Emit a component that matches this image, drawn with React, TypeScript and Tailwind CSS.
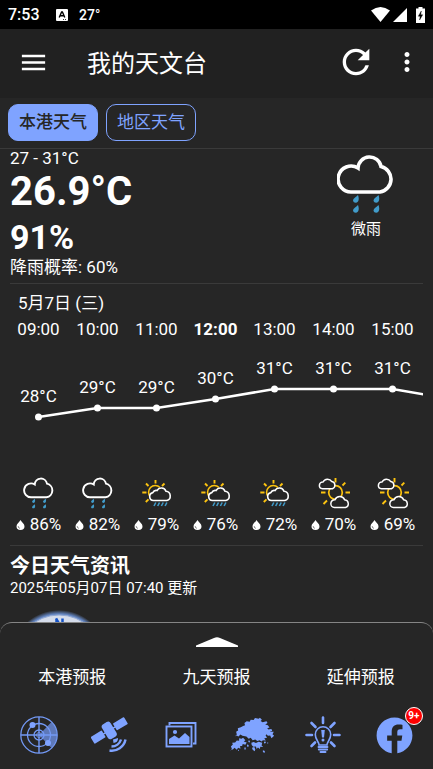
import React, { useState } from 'react';
import { MdMenu, MdMoreVert, MdRefresh } from 'react-icons/md';
import { FaFacebook } from 'react-icons/fa';

type WeatherKind = 'rain' | 'sunRain' | 'sunClouds';

interface HourForecast {
  time: string;
  temp: number;
  humidity: number;
  kind: WeatherKind;
}

const HOURS: HourForecast[] = [
  { time: '09:00', temp: 28, humidity: 86, kind: 'rain' },
  { time: '10:00', temp: 29, humidity: 82, kind: 'rain' },
  { time: '11:00', temp: 29, humidity: 79, kind: 'sunRain' },
  { time: '12:00', temp: 30, humidity: 76, kind: 'sunRain' },
  { time: '13:00', temp: 31, humidity: 72, kind: 'sunRain' },
  { time: '14:00', temp: 31, humidity: 70, kind: 'sunClouds' },
  { time: '15:00', temp: 31, humidity: 69, kind: 'sunClouds' },
];
const NEXT_TEMP = 30;
const CURRENT_HOUR = '12:00';
const COL_WIDTH = 59;

const RainIcon: React.FC<{ className: string; stroke: number }> = ({ className, stroke }) => (
  <svg viewBox="0 0 58 60" className={className} fill="none">
    <path
      d="M15 38A13 13 0 1 1 21 14A11.6 11.6 0 0 1 44 12.5A13 13 0 0 1 43 38Z"
      stroke="#fff"
      strokeWidth={stroke}
    />
    {[[19, 45], [39.5, 45], [19, 55], [39.5, 55]].map(([x, y]) => (
      <path
        key={`${x}-${y}`}
        transform={`translate(${x} ${y})`}
        d="M2-4C3-1 3 1 2 2.5C.5 4.500-2.500 4-3 1.500C-3-.5 0-2 2-4Z"
        fill="#419bc9"
      />
    ))}
  </svg>
);

const SunRainIcon = () => (
  <svg viewBox="0 0 30 28" className="h-7 w-[30px]" fill="none" strokeWidth="1.6">
    <g stroke="#fcc30f">
      <path d="M8.500 18A6.500 6.500 0 1 1 18 8.500" />
      <path d="M13.500 1V4.500M.3 13.500H4.500M4 4.500L6.500 7M20 7L22.500 4.500M3.800 23L6.500 20.300" strokeWidth="1.900" />
    </g>
    <path
      d="M11.500 21.500A4 4 0 0 1 10.800 13.600A3.800 3.800 0 0 1 15 11.500A5 5 0 0 1 24 12.300A4.700 4.700 0 0 1 24.800 21.500Z"
      fill="#262626"
      stroke="#fff"
    />
    <path d="M13.800 23.500L12 27M17.500 23.500L15.700 27M21.200 23.500L19.400 27M24.900 23.500L23.100 27" stroke="#419bc9" />
  </svg>
);

const SunCloudsIcon = () => (
  <svg viewBox="0 0 32 32" className="size-8" fill="none" strokeWidth="1.5">
    <g stroke="#fcc30f">
      <circle cx="17.500" cy="15.500" r="6.800" strokeWidth="1.700" />
      <path d="M17.500 1V5.500M27.500 15.500H32M3 15.500H7.500M24.500 8.500L27.300 5.700M5.500 27L9 23.500" strokeWidth="1.900" />
    </g>
    <g fill="#262626" stroke="#fff">
      <path d="M4.500 11.700A3.300 3.300 0 0 1 5 5A5 5 0 0 1 13.800 4.600A3.700 3.700 0 0 1 14.500 11.700Z" />
      <path d="M16.500 30.500A3.900 3.900 0 0 1 17 22.700A5.200 5.200 0 0 1 26.600 22.700A4 4 0 0 1 27.500 30.500Z" />
    </g>
  </svg>
);

const HourIcon: React.FC<{ kind: WeatherKind }> = ({ kind }) => {
  if (kind === 'rain') return <RainIcon className="size-8" stroke={3.6} />;
  if (kind === 'sunRain') return <SunRainIcon />;
  return <SunCloudsIcon />;
};

const DropIcon = () => (
  <svg viewBox="0 0 9 12" className="h-3 w-[9px]">
    <path d="M4.500 2C5.500 4.200 8.500 5.800 8.500 8.200A4 3.800 0 0 1 .5 8.200C.5 5.800 3.500 4.200 4.500 2Z" fill="#fff" />
    <path d="M2.200 8.200A2.200 2.200 0 0 0 3.800 10.300" stroke="#555" strokeWidth=".8" fill="none" />
  </svg>
);

const TempChart = () => {
  const points = [...HOURS.map((h) => h.temp), NEXT_TEMP].map((t, i) => ({
    x: COL_WIDTH / 2 + i * COL_WIDTH,
    y: 77 - Math.round((t - 28) * 9.2),
    t,
  }));
  return (
    <svg width="472" height="136" className="shrink-0" role="img" aria-label="气温">
      <polyline
        points={points.map((p) => `${p.x},${p.y}`).join(' ')}
        fill="none"
        stroke="#fff"
        strokeWidth="2.500"
      />
      {points.slice(0, HOURS.length).map((p) => (
        <g key={p.x} fill="#fff">
          <circle cx={p.x} cy={p.y} r="3.500" />
          <text x={p.x} y={p.y - 15} textAnchor="middle" fontSize="17">
            {p.t}°C
          </text>
        </g>
      ))}
    </svg>
  );
};

const Compass = () => (
  <svg viewBox="0 0 98 98" className="size-[98px]">
    <defs>
      <radialGradient id="rim">
        <stop offset="88%" stopColor="#7f9fd6" />
        <stop offset="92%" stopColor="#6384bf" />
        <stop offset="100%" stopColor="#262626" />
      </radialGradient>
    </defs>
    <circle cx="49" cy="49" r="49" fill="url(#rim)" />
    <circle cx="49" cy="49" r="44" fill="#d5dceb" stroke="#93a9d2" />
    <path d="M46.500 22V8.500M52.500 22V8.500M46 8.500L53 20" stroke="#1553c7" strokeWidth="2.500" fill="none" />
  </svg>
);

const RadarIcon = () => (
  <svg viewBox="0 0 38 38" className="size-[38px]" fill="none" stroke="#7399f5">
    <path d="M19 19L31.500 6A18 18 0 0 1 31.500 32Z" fill="#5d78b9" stroke="none" />
    <circle cx="19" cy="19" r="18.200" strokeWidth="1.300" />
    <circle cx="19" cy="19" r="11.500" strokeWidth="1.300" />
    <circle cx="19" cy="19" r="5" strokeWidth="1.300" />
    <circle cx="19" cy="19" r="2.500" strokeWidth=".8" />
    <path d="M19 1V37M1 19H37" strokeWidth="1.400" />
    <circle cx="12.500" cy="9" r="3" fill="#7fa3ff" stroke="none" />
    <circle cx="28" cy="27" r="3" fill="#7fa3ff" stroke="none" />
  </svg>
);

const SatelliteIcon = () => (
  <svg viewBox="0 0 38 36" className="h-9 w-[38px]" fill="#7fa3ff">
    <g transform="rotate(-31 18 13)">
      <rect x="13" y="5" width="10" height="17" rx="3" />
      <rect x="-1.500" y="9.500" width="13" height="8" rx=".8" />
      <rect x="24.500" y="9.500" width="13" height="8" rx=".8" />
      <path d="M11 13.500H25" stroke="#7fa3ff" strokeWidth="1.500" />
    </g>
    <path d="M22 22.500L27 21A4.500 4.500 0 0 1 22.500 26Z" />
    <path d="M30 22.500A10 10 0 0 1 20.500 29.500M34.500 22.500A14 14 0 0 1 18.500 33.500" fill="none" stroke="#7fa3ff" strokeWidth="2.500" />
  </svg>
);

const GalleryIcon = () => (
  <svg viewBox="0 0 32 26" className="h-[26px] w-8" fill="none" stroke="#7fa3ff" strokeWidth="1.900">
    <path d="M4.500 3.500V1H30.500V21.500H28" />
    <rect x="1.500" y="4.500" width="25" height="20" />
    <path d="M4 22V17L9.500 13.500L14 16.500L20 11L24.500 15V22Z" fill="#7fa3ff" stroke="none" />
    <circle cx="10" cy="10" r="2.100" fill="#7fa3ff" stroke="none" />
  </svg>
);

// Hong Kong outline: New Territories and Kowloon, Lantau, HK Island, outlying islands
const RegionIcon = () => (
  <svg viewBox="42 46 138 112" className="h-[37px] w-[46px]" fill="#7fa3ff">
    <path d="M59 105L65 99L63 91L69 87L68 80L77 77L84 73L90 71L88 64L95 59L104 60L107 54L116 55L120 49L131 51L135 48L141 54L137 58L143 62L155 59L158 64L151 69L159 71L164 78L157 80L161 84L168 82L167 91L177 91L173 98L178 103L170 110L166 102L159 103L155 98L152 103L157 108L148 111L153 117L144 116L140 120L134 116L127 119L121 114L113 116L107 109L101 112L94 105L82 103L76 99L70 105L64 102Z" />
    <path d="M45 150L50 141L47 135L53 129L51 124L60 123L65 117L72 118L72 110L79 112L84 109L91 116L86 120L95 123L91 130L83 128L81 134L75 134L76 142L69 139L65 145L58 139L53 144L49 144Z" />
    <path d="M109 124L116 122L123 125L131 121L142 124L140 132L145 137L136 136L135 143L129 138L125 143L123 135L115 136L110 131Z" />
    <path d="M111 139L118 137L121 144L119 150L113 145ZM96 129L101 131L100 137L96 135ZM144 147L150 149L149 155L144 152ZM165 84L171 83L172 89L166 88ZM147 121L152 120L153 125L148 126ZM68 145L72 146L70 150ZM88 138H92V144H88ZM100 117L105 118L104 123L100 122ZM157 123H160V126H157Z" />
  </svg>
);

const BulbIcon = () => (
  <svg viewBox="0 0 36 38" className="h-[38px] w-9" fill="none" stroke="#7fa3ff">
    <path d="M18 1.500V7M1.500 19H7M29 19H34.500M6.500 7L10.500 11M29.500 7L25.500 11M6.500 30L10 26.500M29.500 30L26 26.500" strokeWidth="2.600" strokeLinecap="round" />
    <path d="M14 29C14 25.500 10.300 24 10.300 18.500A7.700 7.700 0 0 1 25.700 18.500C25.700 24 22 25.500 22 29Z" strokeWidth="1.600" />
    <path d="M13.500 31H22.500M13.800 33.500H22.200M15.500 36H20.500" strokeWidth="1.900" strokeLinecap="round" />
    <path d="M16.200 14H19.800L19 21.500H17Z" fill="#7fa3ff" stroke="none" />
    <circle cx="18" cy="24" r="1.500" fill="#7fa3ff" stroke="none" />
  </svg>
);

const StatusBar = () => (
  <div className="flex h-[29px] shrink-0 items-center bg-black px-2 font-medium">
    <span className="w-12 text-base">7:53</span>
    <svg viewBox="0 0 12 12" className="mr-[11px] size-3">
      <rect width="12" height="12" rx="1" fill="#fff" />
      <path d="M3.200 8.500L5.600 3H6.400L8.800 8.500M4.200 6.800H7.800" stroke="#000" strokeWidth="1.400" fill="none" />
      <path d="M7 10.500H8M9 10.500H10" stroke="#000" strokeWidth=".8" />
    </svg>
    <span className="text-sm">27°</span>
    <div className="ml-auto flex items-center gap-[3px]">
      <svg viewBox="0 0 19 15" className="h-[15px] w-[19px]" fill="#fff">
        <path d="M0 3.500Q9.500-3.500 19 3.500L9.500 15Z" />
      </svg>
      <svg viewBox="0 0 14 14" className="size-3.5" fill="#fff">
        <path d="M14 0V14H0Z" />
      </svg>
      <svg viewBox="0 0 9 16" className="ml-1.5 h-4 w-[9px]">
        <path d="M2.500 0H6.500V1.500H9V16H0V1.500H2.500Z" fill="#fff" />
        <path d="M5.300 4L2.300 9.200H4.200L3.600 13L6.700 7.800H4.700Z" fill="#000" stroke="#000" strokeWidth=".4" />
      </svg>
    </div>
  </div>
);

const AREAS = ['本港天气', '地区天气'];
const FORECASTS = ['本港预报', '九天预报', '延伸预报'];

const SHORTCUTS = [
  { label: '雷达图像', icon: <RadarIcon /> },
  { label: '卫星图像', icon: <SatelliteIcon /> },
  { label: '天气照片', icon: <GalleryIcon /> },
  { label: '分区天气', icon: <RegionIcon /> },
  { label: '天气提示', icon: <BulbIcon /> },
];

const App: React.FC = () => {
  const [area, setArea] = useState(AREAS[0]);

  return (
    <div className="flex h-screen flex-col bg-[#262626] font-['Roboto','Noto_Sans_CJK_SC',sans-serif] text-white">
      <StatusBar />

      <header className="flex h-[69px] shrink-0 items-center bg-[#212121] pr-[11px] pl-[18px]">
        <button aria-label="菜单" className="pb-0.5">
          <MdMenu size={31} />
        </button>
        <h1 className="ml-[38px] text-2xl">我的天文台</h1>
        <button aria-label="刷新" className="ml-auto pb-[3px]">
          <MdRefresh size={40} />
        </button>
        <button aria-label="更多" className="ml-4 pb-[3px]">
          <MdMoreVert size={30} />
        </button>
      </header>

      {/* Area tabs */}
      <nav className="flex shrink-0 gap-2 border-b border-[#3a3a3a] px-2 pt-1.5 pb-[7px]">
        {AREAS.map((name) => (
          <button
            key={name}
            onClick={() => setArea(name)}
            className={`h-[37px] w-[90px] rounded-[10px] border border-[#7fa3ff] text-[17px] ${
              area === name ? 'bg-[#7fa3ff] font-medium text-[#262626]' : 'text-[#7fa3ff]'
            }`}
          >
            {name}
          </button>
        ))}
      </nav>

      <main className="min-h-0 flex-1 overflow-hidden px-2.5">
        {/* Current conditions */}
        <section className="flex justify-between border-b border-[#3a3a3a] pb-1.5">
          <div>
            <p className="text-[17px] leading-[18px]">27 - 31°C</p>
            <p className="text-[40px] leading-[50px] font-bold">26.9°C</p>
            <p className="text-[34px] leading-10 font-bold">91%</p>
            <p className="text-[17px] leading-5">降雨概率: 60%</p>
          </div>
          <div className="flex w-[114px] flex-col items-center pt-[5px]">
            <RainIcon className="h-[60px] w-[58px]" stroke={3.6} />
            <p className="mt-1 text-[15px] leading-[22px]">微雨</p>
          </div>
        </section>

        {/* Hourly forecast */}
        <section className="border-b border-[#3a3a3a] pt-2 pb-[9px]">
          <h2 className="pl-2 text-[17px] leading-[22px]">5月7日 (三)</h2>
          <div className="-ml-px overflow-hidden">
            <div className="mt-1 flex">
              {HOURS.map((h) => (
                <div
                  key={h.time}
                  className={`w-[59px] shrink-0 text-center text-[17px] leading-[22px] ${
                    h.time === CURRENT_HOUR ? 'font-bold' : ''
                  }`}
                >
                  {h.time}
                </div>
              ))}
            </div>
            <div className="flex">
              <TempChart />
            </div>
            <div className="flex">
              {HOURS.map((h) => (
                <div key={h.time} className="w-[59px] shrink-0">
                  <div className="flex h-[34px] items-center justify-center">
                    <HourIcon kind={h.kind} />
                  </div>
                  <div className="mt-0.5 flex items-center justify-center gap-[5px] text-[17px] leading-6">
                    <DropIcon />
                    {h.humidity}%
                  </div>
                </div>
              ))}
            </div>
          </div>
        </section>

        <section className="pt-2">
          <h2 className="text-xl leading-6 font-bold">今日天气资讯</h2>
          <p className="text-[15px] leading-5">2025年05月07日 07:40 更新</p>
          <div className="mt-3">
            <Compass />
          </div>
        </section>
      </main>

      {/* Bottom sheet */}
      <footer className="shrink-0 rounded-t-xl border-t border-[#858585] pb-[9px]">
        <button aria-label="展开" className="mx-auto mt-3.5 block">
          <svg viewBox="0 0 42 10" className="h-2.5 w-[42px]" fill="#fff">
            <path d="M0 8.500L18 1Q21-.5 24 1L42 8.500V10H0Z" />
          </svg>
        </button>
        <div className="mt-2 grid grid-cols-3">
          {FORECASTS.map((name) => (
            <button key={name} className="h-[46px] text-[17px]">
              {name}
            </button>
          ))}
        </div>
        <div className="mt-[9px] grid h-[50px] grid-cols-6 px-[3px]">
          {SHORTCUTS.map((s) => (
            <button key={s.label} aria-label={s.label} className="flex items-center justify-center">
              {s.icon}
            </button>
          ))}
          <button aria-label="Facebook" className="flex items-center justify-center">
            <span className="relative">
              <FaFacebook size={37} className="text-[#7fa3ff]" />
              <span className="absolute -top-2.5 -right-2.5 flex size-[18px] items-center justify-center rounded-full border border-white bg-[#f00] text-[10px] font-bold">
                9+
              </span>
            </span>
          </button>
        </div>
      </footer>
    </div>
  );
};

export default App;
